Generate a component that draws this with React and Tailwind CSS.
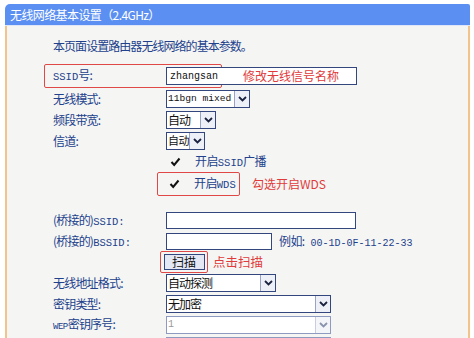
import React from "react";

const CJK = { fontFamily: '"Noto Sans CJK SC", "Noto Sans", sans-serif' };
const MONO = { fontFamily: '"Liberation Mono", "Noto Sans CJK SC", monospace' };

function Chevron({ gray }) {
  return (
    <svg width="9" height="6" viewBox="0 0 9 6">
      <polyline points="1,1 4.5,4.5 8,1" fill="none" stroke={gray ? "#8a93ad" : "#1a2340"} strokeWidth="1.8" />
    </svg>
  );
}

function Select({ w, children, disabled, mono }) {
  return (
    <div
      className={`flex h-[18px] border bg-white ${disabled ? "border-[#8f9ac0]" : "border-[#34467e]"}`}
      style={{ width: w }}
    >
      <div
        className={`flex-1 flex items-center pl-[1px] text-[12px] tracking-[-1px] leading-none whitespace-nowrap ${disabled ? "text-[#9a9a9a]" : "text-[#111]"}`}
        style={mono ? MONO : CJK}
      >
        {children}
      </div>
      <div
        className={`w-[15px] shrink-0 flex items-center justify-center border-l ${disabled ? "border-[#c9cede] bg-[#f4f5f8]" : "border-[#9aa3c2] bg-[#eef0f7]"}`}
      >
        <Chevron gray={disabled} />
      </div>
    </div>
  );
}

function Label({ children }) {
  return (
    <div className="w-[113px] shrink-0 text-[12px] tracking-[-0.8px] text-[#22418c] whitespace-nowrap" style={CJK}>
      {children}
    </div>
  );
}

function Check() {
  return (
    <div className="w-[11px] h-[11px] flex items-center justify-center">
      <svg width="11" height="10" viewBox="0 0 11 10">
        <polyline points="1.5,5 4.2,8 9.5,1.5" fill="none" stroke="#111" strokeWidth="2" />
      </svg>
    </div>
  );
}

export default function App() {
  return (
    <div className="w-[474px] h-[338px] overflow-hidden bg-white pl-[5px] pt-[4px]">
      <div className="w-[465px]">
        <div
          className="h-[22px] bg-[#5b8ff2] rounded-tl-[5px] rounded-tr-[2px] border-b border-[#dfe7f7] flex items-center pl-[5px] text-white text-[12px] tracking-[-0.6px]"
          style={CJK}
        >
          无线网络基本设置（2.4GHz）
        </div>
        <div className="border-l-2 border-r-2 border-[#f2c48c] bg-[#f5f5f3] pl-[46px] h-[320px]">
          <div className="pt-[9px] h-[30px] flex items-center text-[12px] tracking-[-0.95px] text-[#22418c]" style={CJK}>
            本页面设置路由器无线网络的基本参数。
          </div>

          {/* SSID row */}
          <div className="relative mt-[8px] h-[24px] flex items-center">
            <div className="absolute left-[-9px] top-0 w-[178px] h-[24px] border-[1.5px] border-[#e04848] rounded-[2px]" />
            <Label>
              <span style={MONO} className="text-[10.5px] tracking-normal">SSID</span>号:
            </Label>
            <div className="relative w-[191px] h-[18px] border border-[#34467e] bg-white flex items-center">
              <span className="pl-[3px] text-[10px] text-[#111]" style={MONO}>zhangsan</span>
              <span className="ml-[25px] text-[12px] text-[#e03a3a]" style={CJK}>修改无线信号名称</span>
            </div>
          </div>

          <div className="h-[21px] flex items-center">
            <Label>无线模式:</Label>
            <Select w="84px" mono>
              <span className="text-[9.6px] tracking-normal">11bgn mixed</span>
            </Select>
          </div>
          <div className="h-[21px] flex items-center">
            <Label>频段带宽:</Label>
            <Select w="50px">自动</Select>
          </div>
          <div className="h-[21px] flex items-center">
            <Label>信道:</Label>
            <Select w="39px">
              <span className="text-[11px] tracking-[-0.5px]">自动</span>
            </Select>
          </div>
          <div className="h-[21px] flex items-center">
            <div className="w-[117px] shrink-0" />
            <Check />
            <span className="ml-[14px] text-[12px] tracking-[-0.6px] text-[#22418c]" style={CJK}>
              开启<span style={MONO} className="text-[10.5px] tracking-normal">SSID</span>广播
            </span>
          </div>
          <div className="h-[24px] flex items-center">
            <div className="w-[104px] shrink-0" />
            <div className="w-[83px] h-[24px] border-[1.5px] border-[#e04848] rounded-[2px] flex items-center pl-[11px]">
              <Check />
              <span className="ml-[14px] text-[12px] tracking-[-0.6px] text-[#22418c]" style={CJK}>
                开启<span style={MONO} className="text-[10.5px] tracking-normal">WDS</span>
              </span>
            </div>
            <span className="ml-[12px] text-[12px] text-[#e03a3a]" style={CJK}>勾选开启WDS</span>
          </div>

          <div className="h-[14px]" />

          <div className="h-[21px] flex items-center">
            <Label>
              (桥接的)<span style={MONO} className="text-[10.5px] tracking-normal">SSID:</span>
            </Label>
            <div className="w-[190px] h-[17px] border border-[#34467e] bg-white" />
          </div>
          <div className="h-[21px] flex items-center">
            <Label>
              (桥接的)<span style={MONO} className="text-[10.5px] tracking-normal">BSSID:</span>
            </Label>
            <div className="w-[106px] h-[17px] border border-[#34467e] bg-white" />
            <span className="ml-[7px] text-[12px] tracking-[-0.6px] text-[#22418c] whitespace-nowrap" style={CJK}>
              例如:<span style={MONO} className="text-[10px] tracking-normal"> 00-1D-0F-11-22-33</span>
            </span>
          </div>
          <div className="h-[20px] flex items-center">
            <div className="w-[107px] shrink-0" />
            <div className="w-[48px] h-[22px] border-[1.5px] border-[#e04848] rounded-[2px] flex items-center justify-center">
              <div className="w-[41px] h-[16px] border border-[#34467e] bg-[#e4e7f4] flex items-center justify-center text-[12px] text-[#111]" style={CJK}>
                扫描
              </div>
            </div>
            <span className="ml-[5px] text-[12.5px] text-[#e03a3a]" style={CJK}>点击扫描</span>
          </div>
          <div className="h-[21px] flex items-center">
            <Label>无线地址格式:</Label>
            <Select w="110px">自动探测</Select>
          </div>
          <div className="h-[21px] flex items-center">
            <Label>密钥类型:</Label>
            <Select w="165px">无加密</Select>
          </div>
          <div className="h-[21px] flex items-center">
            <Label>
              <span style={MONO} className="text-[9px] tracking-[-0.5px]">WEP</span>密钥序号:
            </Label>
            <Select w="165px" disabled mono>
              <span className="text-[10px] tracking-normal">1</span>
            </Select>
          </div>
          <div className="h-[21px] flex items-center">
            <Label>认证类型:</Label>
            <Select w="165px" disabled>开放系统</Select>
          </div>
        </div>
      </div>
    </div>
  );
}
